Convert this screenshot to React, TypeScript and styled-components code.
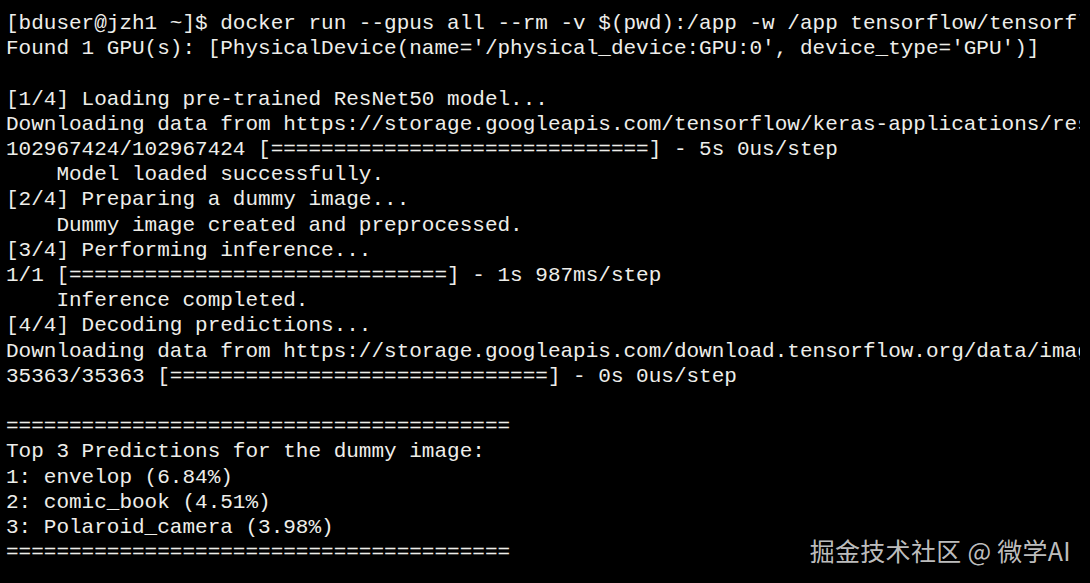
import React from "react";
import styled, { createGlobalStyle } from "styled-components";

const Global = createGlobalStyle`
  html, body { margin: 0; padding: 0; background: #000; }
  body { width: 1090px; height: 583px; overflow: hidden; }
`;

const Terminal = styled.div`
  position: relative;
  width: 1090px;
  height: 583px;
  background: #000;
  overflow: hidden;
  box-sizing: border-box;
  padding: 11px 0 0 6px;
`;

const Output = styled.pre`
  margin: 0;
  width: 1074px;
  overflow: hidden;
  font-family: "Liberation Mono", "Courier New", monospace;
  font-size: 21px;
  line-height: 25.2px;
  color: #eeeeea;
  white-space: pre;
`;

const Watermark = styled.div`
  position: absolute;
  right: 19px;
  bottom: 18px;
  font-family: "Noto Sans CJK SC", "Noto Sans", sans-serif;
  font-size: 25px;
  line-height: 30px;
  color: rgba(215, 215, 215, 0.9);
  letter-spacing: 0.3px;
`;

const lines = [
  "[bduser@jzh1 ~]$ docker run --gpus all --rm -v $(pwd):/app -w /app tensorflow/tensorflow:latest-gpu python predict.py",
  "Found 1 GPU(s): [PhysicalDevice(name='/physical_device:GPU:0', device_type='GPU')]",
  "",
  "[1/4] Loading pre-trained ResNet50 model...",
  "Downloading data from https://storage.googleapis.com/tensorflow/keras-applications/resnet/resnet50_weights_tf_dim_ordering_tf_kernels.h5",
  "102967424/102967424 [==============================] - 5s 0us/step",
  "    Model loaded successfully.",
  "[2/4] Preparing a dummy image...",
  "    Dummy image created and preprocessed.",
  "[3/4] Performing inference...",
  "1/1 [==============================] - 1s 987ms/step",
  "    Inference completed.",
  "[4/4] Decoding predictions...",
  "Downloading data from https://storage.googleapis.com/download.tensorflow.org/data/imagenet_class_index.json",
  "35363/35363 [==============================] - 0s 0us/step",
  "",
  "========================================",
  "Top 3 Predictions for the dummy image:",
  "1: envelop (6.84%)",
  "2: comic_book (4.51%)",
  "3: Polaroid_camera (3.98%)",
  "========================================",
];

export default function App() {
  return (
    <>
      <Global />
      <Terminal>
        <Output>{lines.join("\n")}</Output>
        <Watermark>掘金技术社区 @ 微学AI</Watermark>
      </Terminal>
    </>
  );
}
